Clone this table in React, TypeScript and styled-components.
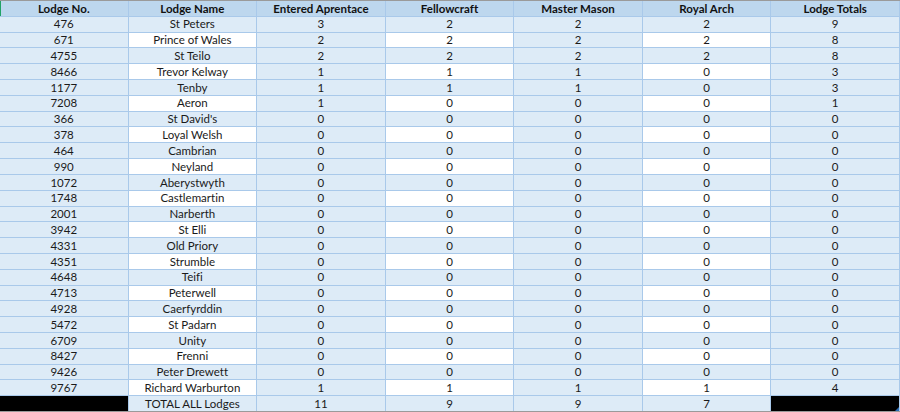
import { ReactElement } from "react";
import styled, { createGlobalStyle } from "styled-components";

const GlobalStyle = createGlobalStyle`
    html, body {
        margin: 0;
        padding: 0;
        background: #ffffff;
    }
    body {
        font-family: Lato, "Liberation Sans", sans-serif;
        font-variant-ligatures: none;
    }
`;

type Lodge = {
    no: string;
    name: string;
    ea: number;
    fc: number;
    mm: number;
    ra: number;
};

const lodges: Lodge[] = [
    { no: "476", name: "St Peters", ea: 3, fc: 2, mm: 2, ra: 2 },
    { no: "671", name: "Prince of Wales", ea: 2, fc: 2, mm: 2, ra: 2 },
    { no: "4755", name: "St Teilo", ea: 2, fc: 2, mm: 2, ra: 2 },
    { no: "8466", name: "Trevor Kelway", ea: 1, fc: 1, mm: 1, ra: 0 },
    { no: "1177", name: "Tenby", ea: 1, fc: 1, mm: 1, ra: 0 },
    { no: "7208", name: "Aeron", ea: 1, fc: 0, mm: 0, ra: 0 },
    { no: "366", name: "St David's", ea: 0, fc: 0, mm: 0, ra: 0 },
    { no: "378", name: "Loyal Welsh", ea: 0, fc: 0, mm: 0, ra: 0 },
    { no: "464", name: "Cambrian", ea: 0, fc: 0, mm: 0, ra: 0 },
    { no: "990", name: "Neyland", ea: 0, fc: 0, mm: 0, ra: 0 },
    { no: "1072", name: "Aberystwyth", ea: 0, fc: 0, mm: 0, ra: 0 },
    { no: "1748", name: "Castlemartin", ea: 0, fc: 0, mm: 0, ra: 0 },
    { no: "2001", name: "Narberth", ea: 0, fc: 0, mm: 0, ra: 0 },
    { no: "3942", name: "St Elli", ea: 0, fc: 0, mm: 0, ra: 0 },
    { no: "4331", name: "Old Priory", ea: 0, fc: 0, mm: 0, ra: 0 },
    { no: "4351", name: "Strumble", ea: 0, fc: 0, mm: 0, ra: 0 },
    { no: "4648", name: "Teifi", ea: 0, fc: 0, mm: 0, ra: 0 },
    { no: "4713", name: "Peterwell", ea: 0, fc: 0, mm: 0, ra: 0 },
    { no: "4928", name: "Caerfyrddin", ea: 0, fc: 0, mm: 0, ra: 0 },
    { no: "5472", name: "St Padarn", ea: 0, fc: 0, mm: 0, ra: 0 },
    { no: "6709", name: "Unity", ea: 0, fc: 0, mm: 0, ra: 0 },
    { no: "8427", name: "Frenni", ea: 0, fc: 0, mm: 0, ra: 0 },
    { no: "9426", name: "Peter Drewett", ea: 0, fc: 0, mm: 0, ra: 0 },
    { no: "9767", name: "Richard Warburton", ea: 1, fc: 1, mm: 1, ra: 1 },
];

const headers = ["Lodge No.", "Lodge Name", "Entered Aprentace", "Fellowcraft", "Master Mason", "Royal Arch", "Lodge Totals"];

const Sheet = styled.div`
    width: 900px;
    height: 412px;
    box-sizing: border-box;
    border-top: 1px solid #9a9a9a;
    border-bottom: 1px solid #9a9a9a;
    background: #ffffff;
    position: relative;
`;

const Grid = styled.div`
    width: 899px;
    height: 100%;
    display: grid;
    grid-template-columns: repeat(7, 1fr);
    grid-template-rows: repeat(26, 1fr);
    gap: 1px;
    background: #a9c9ea;
    border-right: 1px solid #a9c9ea;
`;

const HeadCell = styled.div<{ $first?: boolean }>`
    background: #bdd7ee;
    color: #111;
    font-weight: 700;
    font-size: 11.5px;
    display: flex;
    align-items: center;
    justify-content: center;
    white-space: nowrap;
    box-shadow: ${(p) => (p.$first ? "inset 1px 0 0 #21a366" : "none")};
`;

const Cell = styled.div<{ $tone: "blue" | "white" | "black" }>`
    background: ${(p) => (p.$tone === "white" ? "#ffffff" : p.$tone === "black" ? "#000000" : "#ddebf7")};
    color: #1a1a1a;
    font-size: 11.5px;
    display: flex;
    align-items: center;
    justify-content: center;
    white-space: nowrap;
    line-height: 1;
`;

const Grip = styled.div`
    position: absolute;
    right: 1px;
    bottom: 0;
    width: 0;
    height: 0;
    border-left: 4px solid transparent;
    border-bottom: 4px solid #2a6db5;
`;

const App = (): ReactElement => {
    const totals = lodges.reduce(
        (acc, l) => ({ ea: acc.ea + l.ea, fc: acc.fc + l.fc, mm: acc.mm + l.mm, ra: acc.ra + l.ra }),
        { ea: 0, fc: 0, mm: 0, ra: 0 }
    );

    return (
        <>
            <GlobalStyle />
            <Sheet>
                <Grid>
                    {headers.map((h, i) => (
                        <HeadCell key={h} $first={i === 0}>{h}</HeadCell>
                    ))}
                    {lodges.map((l, r) => {
                        const odd = r % 2 === 1;
                        const values = [l.no, l.name, l.ea, l.fc, l.mm, l.ra, l.ea + l.fc + l.mm + l.ra];
                        return values.map((v, c) => (
                            <Cell key={`${l.no}-${c}`} $tone={odd && c % 2 === 1 ? "white" : "blue"}>
                                {v}
                            </Cell>
                        ));
                    })}
                    <Cell $tone="black" />
                    <Cell $tone="blue">TOTAL ALL Lodges</Cell>
                    <Cell $tone="blue">{totals.ea}</Cell>
                    <Cell $tone="blue">{totals.fc}</Cell>
                    <Cell $tone="blue">{totals.mm}</Cell>
                    <Cell $tone="blue">{totals.ra}</Cell>
                    <Cell $tone="black" />
                </Grid>
                <Grip />
            </Sheet>
        </>
    );
};

export default App;
